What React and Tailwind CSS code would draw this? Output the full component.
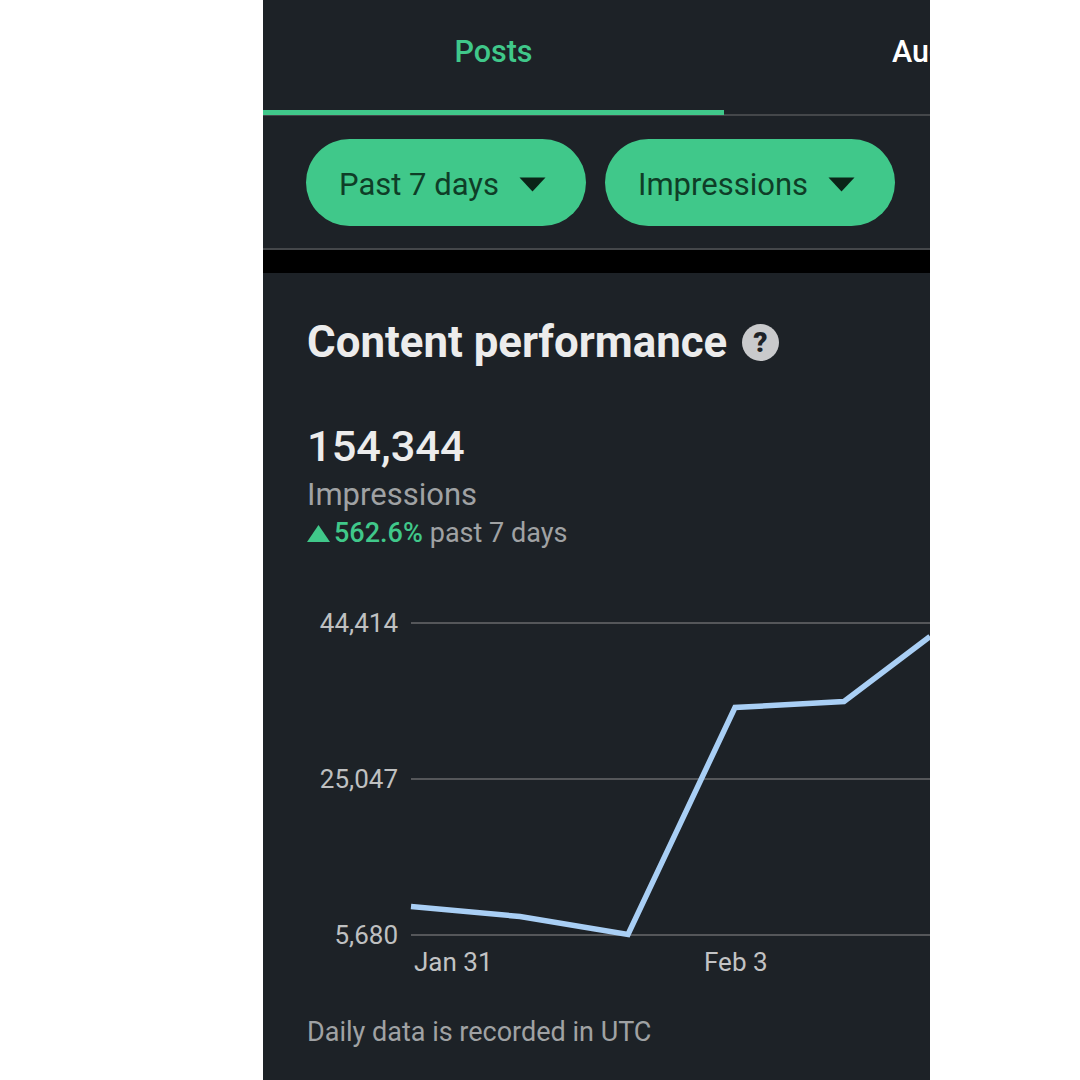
const Caret = () => (
  <svg width="27" height="15" viewBox="0 0 27 15" className="block">
    <path d="M0.500 0.500H26.500L13.500 14.500Z" fill="#0a2417" />
  </svg>
);

const Pill = ({ label, className }) => (
  <div className={`flex h-[87px] items-center justify-between rounded-[44px] bg-[#40c88a] pl-[33px] pr-[40px] pt-[4px] ${className}`}>
    <span className="text-[31px] leading-none text-[#0f3d27]">{label}</span>
    <Caret />
  </div>
);

const GridRow = ({ value }) => (
  <div className="flex h-[2px] items-center gap-[13px]">
    <span className="w-[135px] shrink-0 text-right text-[26px] leading-none text-[#bfc0c1]">{value}</span>
    <div className="h-[2px] flex-1 bg-[#55575a]" />
  </div>
);

export default function App() {
  return (
    <div className="flex h-[1080px] w-[1080px] justify-start bg-white font-['Roboto',sans-serif]">
      <div className="ml-[263px] flex h-[1080px] w-[667px] flex-col overflow-hidden bg-[#1d2227]">
        <div className="flex h-[250px] shrink-0 flex-col border-b-2 border-[#44474a]">
          <div className="relative flex h-[116px] shrink-0 border-b-2 border-[#44474a]">
            <div className="flex h-[115px] w-[461px] shrink-0 justify-center border-b-[5px] border-[#40c88a] pt-[34px]">
              <span className="text-[30.5px] font-medium leading-[36px] text-[#40c88a]">Posts</span>
            </div>
            <div className="pl-[168px] pt-[34px]">
              <span className="whitespace-nowrap text-[30.5px] font-medium leading-[36px] text-white">Audience</span>
            </div>
          </div>
          <div className="flex gap-[19px] pl-[43px] pt-[23px]">
            <Pill label="Past 7 days" className="w-[280px]" />
            <Pill label="Impressions" className="w-[290px]" />
          </div>
        </div>
        <div className="h-[23px] shrink-0 bg-black" />
        <div className="flex flex-1 flex-col">
          <div className="flex items-center gap-[15px] pl-[44px] pt-[44px]">
            <h2 className="text-[43.800px] font-bold leading-[50px] text-[#ececec]">Content performance</h2>
            <svg width="37" height="37" viewBox="0 0 37 37">
              <circle cx="18.5" cy="18.5" r="18.5" fill="#c9cacc" />
              <text x="18.5" y="28" textAnchor="middle" fontSize="28" fontWeight="900" fontFamily="Roboto, sans-serif" fill="#1d2227">?</text>
            </svg>
          </div>
          <div className="pl-[44px] pt-[55px]">
            <div className="text-[43.400px] font-medium leading-[50px] text-[#ececec]">154,344</div>
            <div className="mt-[5px] text-[31px] leading-[36px] text-[#a0a2a4]">Impressions</div>
            <div className="mt-[4px] flex items-center text-[27px] leading-[32px]">
              <svg width="23" height="17" viewBox="0 0 23 17" className="mr-[4px]">
                <path d="M11.5 0L23 17H0Z" fill="#40c88a" />
              </svg>
              <span className="font-medium text-[#40c88a]">562.6%</span>
              <span className="ml-[7px] text-[#a0a2a4]">past 7 days</span>
            </div>
          </div>
          <div className="relative mt-[73px] flex h-[314px] flex-col justify-between">
            <GridRow value="44,414" />
            <GridRow value="25,047" />
            <GridRow value="5,680" />
            <svg width="667" height="330" viewBox="0 0 667 330" className="absolute left-0 top-0">
              <path d="M148 284.500L257 294.500L365 312.500L472 85.500L581 79.500L667 14.500" fill="none" stroke="#a9cff5" strokeWidth="5.500" />
            </svg>
          </div>
          <div className="flex pt-[11px] text-[26px] leading-[30px] text-[#c2c3c4]">
            <span className="ml-[151px] w-[290px]">Jan 31</span>
            <span>Feb 3</span>
          </div>
          <div className="pl-[44px] pt-[39px] text-[27px] leading-[32px] text-[#a0a2a4]">Daily data is recorded in UTC</div>
        </div>
      </div>
    </div>
  );
}
